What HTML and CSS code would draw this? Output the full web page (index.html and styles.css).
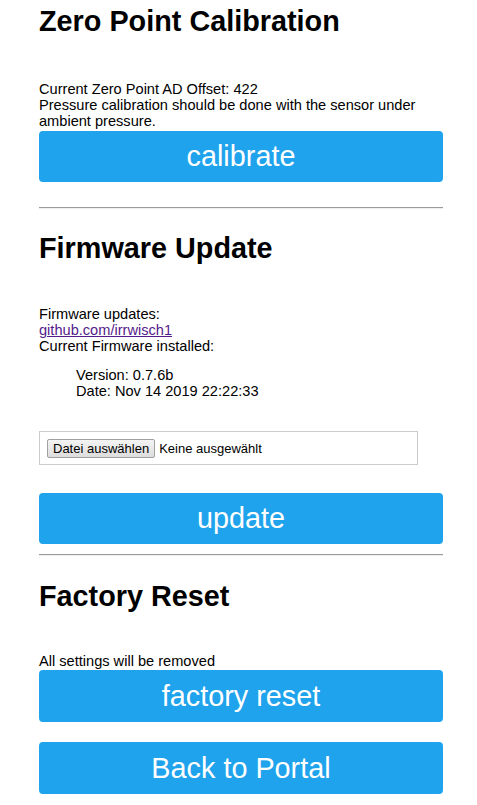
FILE: index.html
```html
<!DOCTYPE html>
<html>
<head>
<meta charset="utf-8">
<link rel="stylesheet" href="styles.css">
<title>Settings</title>
</head>
<body>
<div class="page">
  <h1 class="title">Zero Point Calibration</h1>
  <div class="text text-1">Current Zero Point AD Offset: 422<br>Pressure calibration should be done with the sensor under ambient pressure.</div>
  <button class="btn btn-cal">calibrate</button>
  <hr class="rule rule-1">

  <h1 class="title title-2">Firmware Update</h1>
  <div class="text text-2">Firmware updates:<br><a class="link" href="#">github.com/irrwisch1</a><br>Current Firmware installed:</div>
  <div class="text version">Version: 0.7.6b<br>Date: Nov 14 2019 22:22:33</div>
  <div class="filebox">
    <span class="filebtn">Datei auswählen</span><span class="filename">Keine ausgewählt</span>
  </div>
  <button class="btn btn-update">update</button>
  <hr class="rule rule-2">

  <h1 class="title title-3">Factory Reset</h1>
  <div class="text text-3">All settings will be removed</div>
  <button class="btn btn-reset">factory reset</button>
  <button class="btn btn-back">Back to Portal</button>
</div>
</body>
</html>
```
FILE: styles.css
```css
html, body {
  margin: 0;
  padding: 0;
  background: #fff;
}
body {
  font-family: "Liberation Sans", Arial, sans-serif;
  color: #000;
}
.page {
  width: 404px;
  margin-left: 39px;
  padding-top: 5px;
}
.title {
  font-size: 28.8px;
  font-weight: bold;
  line-height: 33px;
  margin: 0;
}
.title-2 { margin-top: 23px; }
.title-3 { margin-top: 24px; }
.text {
  font-size: 14.6px;
  line-height: 16px;
}
.text-1 { margin-top: 43px; }
.text-2 { margin-top: 41px; }
.text-3 { margin-top: 40px; }
.version {
  margin: 13px 0 0 37px;
}
.link {
  color: #551a8b;
  text-decoration: underline;
}
.btn {
  display: block;
  width: 404px;
  height: 51px;
  border: 0;
  border-radius: 4px;
  background: #1fa3ec;
  color: #fff;
  font-family: "Liberation Sans", Arial, sans-serif;
  font-size: 28.8px;
  padding: 0;
  margin: 0;
}
.btn-cal { margin-top: 2px; }
.btn-update { margin-top: 28px; }
.btn-reset { margin-top: 1px; height: 52px; }
.btn-back { margin-top: 20px; height: 52px; }
.rule {
  border: 0;
  border-top: 1px solid #9a9a9a;
  border-bottom: 1px solid #eee;
  height: 0;
  margin: 25px 0 0;
}
.rule-2 { margin-top: 10px; }
.filebox {
  box-sizing: border-box;
  width: 379px;
  height: 34px;
  margin-top: 32px;
  border: 1px solid #ccc;
  display: flex;
  align-items: center;
  padding-left: 7px;
  font-size: 13px;
}
.filebtn {
  box-sizing: border-box;
  height: 19px;
  padding: 0 5px;
  border: 1px solid #a0a0a0;
  background: linear-gradient(#f4f4f4, #dddddd);
  border-radius: 2px;
  display: flex;
  align-items: center;
  color: #000;
}
.filename {
  margin-left: 4px;
  color: #000;
}
```
